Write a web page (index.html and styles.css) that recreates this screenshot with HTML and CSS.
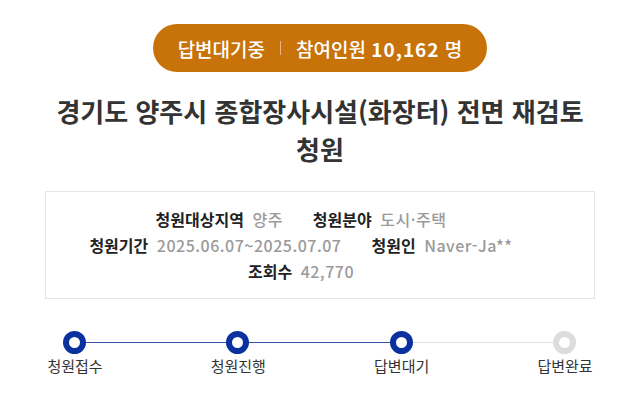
FILE: index.html
```html
<!DOCTYPE html>
<html lang="ko">
<head>
    <meta charset="UTF-8">
    <meta name="viewport" content="width=device-width, initial-scale=1.0">
    <title>청원</title>
    <link rel="stylesheet" href="styles.css">
</head>
<body>
    <main class="petition">

        <div class="status">
            <span class="status-badge">
                <span>답변대기중</span>
                <span class="divider"></span>
                <span>참여인원 <b>10,162</b> 명</span>
            </span>
        </div>

        <h1 class="title">경기도 양주시 종합장사시설(화장터) 전면 재검토<br>청원</h1>

        <div class="info">
            <div class="info-row">
                <span class="item"><b>청원대상지역</b> <span class="value">양주</span></span>
                <span class="item"><b>청원분야</b> <span class="value">도시·주택</span></span>
            </div>
            <div class="info-row">
                <span class="item"><b>청원기간</b> <span class="value">2025.06.07~2025.07.07</span></span>
                <span class="item"><b>청원인</b> <span class="value">Naver-Ja**</span></span>
            </div>
            <div class="info-row">
                <span class="item"><b>조회수</b> <span class="value">42,770</span></span>
            </div>
        </div>

        <ol class="steps">
            <li class="step done">청원접수</li>
            <li class="step done">청원진행</li>
            <li class="step current">답변대기</li>
            <li class="step">답변완료</li>
        </ol>

    </main>
</body>
</html>
```

FILE: styles.css
```css
body {
    margin: 0;
    padding: 0;
    background-color: #fff;
    color: #222;
    font-family: "Noto Sans CJK KR", "Noto Sans", sans-serif;
}

.petition {
    width: 550px;
    margin: 0 auto;
    padding-top: 24px;
}

/* status pill */
.status {
    text-align: center;
}

.status-badge {
    display: inline-flex;
    align-items: center;
    gap: 15px;
    height: 48px;
    padding: 0 25px;
    border-radius: 24px;
    background-color: #c8730a;
    color: #fff;
    font-size: 19px;
    font-weight: 500;
}

.status-badge b {
    font-weight: 700;
    letter-spacing: 1px;
}

.divider {
    width: 1px;
    height: 14px;
    background-color: #eab57a;
}

/* title */
.title {
    margin: 20px 0 0;
    text-align: center;
    font-size: 26px;
    line-height: 38px;
    font-weight: 700;
    color: #333;
}

/* info box */
.info {
    margin-top: 23px;
    padding: 14px 38px 14px 0;
    border: 1px solid #e6e6e6;
    font-size: 16px;
    line-height: 26px;
}

.info-row {
    display: flex;
    justify-content: center;
    gap: 30px;
}

.info-row b {
    color: #222;
    margin-right: 4px;
}

.value {
    color: #9a9a9a;
    font-weight: 500;
    letter-spacing: 0.5px;
}

/* progress steps */
.steps {
    list-style: none;
    margin: 32px 0 0;
    padding: 0;
    display: flex;
    justify-content: space-between;
}

.step {
    position: relative;
    width: 60px;
    padding-top: 25px;
    text-align: center;
    font-size: 15px;
    line-height: 20px;
    color: #333;
}

.step::before {
    content: "";
    position: absolute;
    top: 0;
    left: 18px;
    width: 11px;
    height: 11px;
    border: 6px solid #dcdcdc;
    border-radius: 50%;
    background-color: #fff;
    z-index: 1;
}

.step.done::before,
.step.current::before {
    border-color: #0a319e;
}

/* connector line to next step */
.step::after {
    content: "";
    position: absolute;
    top: 11px;
    left: 30px;
    width: 164px;
    height: 1px;
    background-color: #e0e0e0;
}

.step.done::after {
    background-color: #3552a8;
}

.step:last-child::after {
    display: none;
}
```
